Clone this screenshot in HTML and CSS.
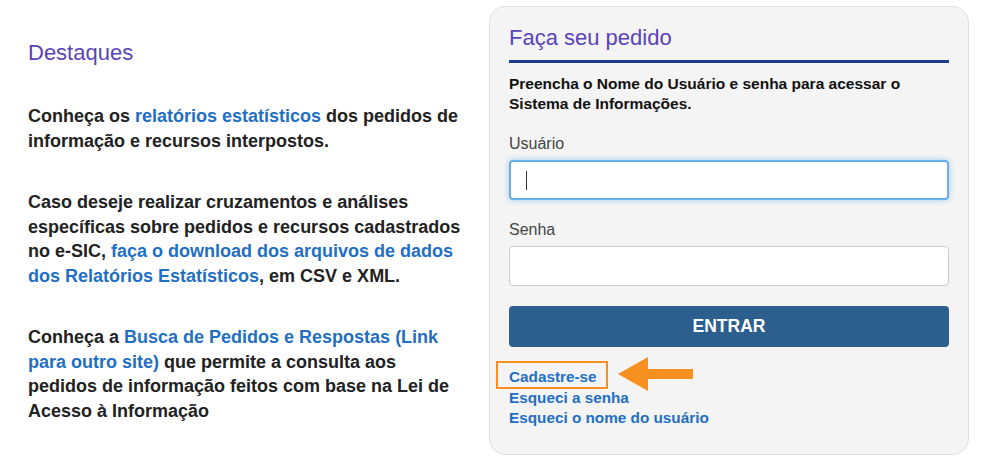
FILE: index.html
```html
<!DOCTYPE html>
<html lang="pt-BR">
<head>
    <meta charset="UTF-8">
    <title>e-SIC - Acesso</title>
    <link rel="stylesheet" href="styles.css">
</head>
<body>
    <main class="page">
        <section class="highlights">
            <h2>Destaques</h2>
            <p>Conheça os <a href="#">relatórios estatísticos</a> dos pedidos de informação e recursos interpostos.</p>
            <p>Caso deseje realizar cruzamentos e análises específicas sobre pedidos e recursos cadastrados no e-SIC, <a href="#">faça o download dos arquivos de dados dos Relatórios Estatísticos</a>, em CSV e XML.</p>
            <p>Conheça a <a href="#">Busca de Pedidos e Respostas (Link para outro site)</a> que permite a consulta aos pedidos de informação feitos com base na Lei de Acesso à Informação</p>
        </section>
        <section class="login-panel">
            <h2>Faça seu pedido</h2>
            <p class="intro">Preencha o Nome do Usuário e senha para acessar o Sistema de Informações.</p>
            <label class="field-label">Usuário</label>
            <div class="field focused"><span class="caret"></span></div>
            <label class="field-label second">Senha</label>
            <div class="field"></div>
            <button class="btn-enter">ENTRAR</button>
            <div class="links">
                <a href="#" class="highlight-link">Cadastre-se</a>
                <a href="#">Esqueci a senha</a>
                <a href="#">Esqueci o nome do usuário</a>
                <svg class="arrow" width="80" height="40" viewBox="0 0 80 40">
                    <polygon points="0,18 30,1 30,13 75,13 75,23 30,23 30,35" fill="#f7901e"/>
                </svg>
            </div>
        </section>
    </main>
</body>
</html>
```

FILE: styles.css
```css
body {
    margin: 0;
    background: #fff;
    font-family: "Liberation Sans", Arial, sans-serif;
    color: #222;
}
a {
    color: #1f6fc4;
    text-decoration: none;
}
.page {
    display: flex;
    align-items: flex-start;
    padding-top: 6px;
}
.highlights {
    width: 442px;
    padding: 34px 19px 0 28px;
}
.highlights h2 {
    margin: 0 0 38px;
    font-size: 22px;
    line-height: 26px;
    font-weight: normal;
    color: #5b43b8;
}
.highlights p {
    margin: 0 0 37px;
    font-size: 18px;
    line-height: 24.5px;
    font-weight: bold;
}
.login-panel {
    width: 440px;
    height: 407px;
    padding: 18px 19px 22px 19px;
    background: #f4f4f4;
    border: 1px solid #e0e0e0;
    border-radius: 16px;
    display: flex;
    flex-direction: column;
}
.login-panel h2 {
    margin: 0;
    padding-bottom: 9px;
    font-size: 22px;
    line-height: 26px;
    font-weight: normal;
    color: #5b43b8;
    border-bottom: 3px solid #1d3f8a;
}
.intro {
    margin: 11px 0 0;
    font-size: 15.5px;
    line-height: 20px;
    font-weight: bold;
    color: #111;
}
.field-label {
    margin-top: 20px;
    margin-bottom: 6px;
    font-size: 16px;
    line-height: 20px;
    color: #444;
}
.field {
    height: 38px;
    background: #fff;
    border: 1px solid #ccc;
    border-radius: 4px;
    display: flex;
    align-items: center;
}
.field.focused {
    border: 2px solid #66afe9;
    height: 36px;
    box-shadow: 0 0 6px rgba(102, 175, 233, 0.6);
}
.caret {
    width: 1px;
    height: 19px;
    margin-left: 15px;
    background: #333;
}
.btn-enter {
    margin-top: 20px;
    height: 41px;
    border: 0;
    border-radius: 4px;
    background: #2c5f8d;
    color: #fff;
    font-family: inherit;
    font-size: 17.5px;
    font-weight: bold;
}
.links {
    position: relative;
    margin-top: 20px;
    display: flex;
    flex-direction: column;
    align-items: flex-start;
}
.links a {
    font-size: 15.3px;
    line-height: 20.5px;
    font-weight: bold;
}
.highlight-link {
    position: relative;
}
.highlight-link::after {
    content: "";
    position: absolute;
    left: -13px;
    top: -6px;
    width: 108px;
    height: 24px;
    border: 2px solid #f7901e;
}
.arrow {
    position: absolute;
    left: 109px;
    top: -11px;
}
```
